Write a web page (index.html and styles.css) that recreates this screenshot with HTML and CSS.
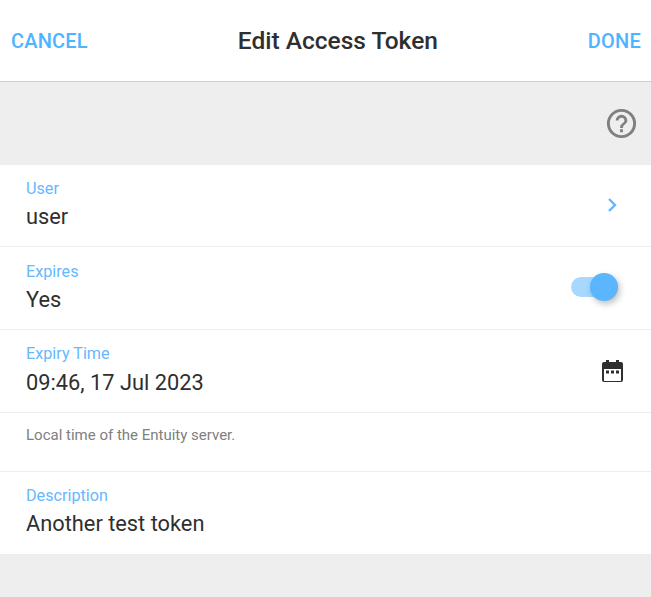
FILE: index.html
```html
<!DOCTYPE html>
<html lang="en">
<head>
<meta charset="utf-8">
<title>Edit Access Token</title>
<link rel="stylesheet" href="styles.css">
</head>
<body>
<header class="topbar">
  <span class="action">CANCEL</span>
  <h1 class="title">Edit Access Token</h1>
  <span class="action">DONE</span>
</header>
<div class="helpband">
  <svg class="help-icon" viewBox="0 0 24 24"><path d="M11,18H13V16H11V18M12,2A10,10 0 0,0 2,12A10,10 0 0,0 12,22A10,10 0 0,0 22,12A10,10 0 0,0 12,2M12,20C7.59,20 4,16.41 4,12C4,7.59 7.59,4 12,4C16.41,4 20,7.59 20,12C20,16.41 16.41,20 12,20M12,6A4,4 0 0,0 8,10H10A2,2 0 0,1 12,8A2,2 0 0,1 14,10C14,12 11,11.75 11,15H13C13,12.75 16,12.5 16,10A4,4 0 0,0 12,6Z"/></svg>
</div>
<main class="form">
  <div class="row">
    <div class="field"><div class="label">User</div><div class="value">user</div></div>
    <svg class="chevron" viewBox="0 0 10 16"><path d="M2 2l6 6-6 6"/></svg>
  </div>
  <div class="row">
    <div class="field"><div class="label">Expires</div><div class="value">Yes</div></div>
    <div class="toggle"><span class="thumb"></span></div>
  </div>
  <div class="row">
    <div class="field"><div class="label">Expiry Time</div><div class="value">09:46, 17 Jul 2023</div></div>
    <svg class="calendar" viewBox="0 0 21 22"><path d="M4 0h3v2h7V0h3v2h2a2 2 0 0 1 2 2v16a2 2 0 0 1-2 2H2a2 2 0 0 1-2-2V4a2 2 0 0 1 2-2h2z"/><rect class="cal-face" x="2" y="9" width="17" height="12"/><rect x="4" y="10.500" width="3" height="3"/><rect x="9" y="10.500" width="3" height="3"/><rect x="14" y="10.500" width="3" height="3"/></svg>
  </div>
  <div class="note">Local time of the Entuity server.</div>
  <div class="row">
    <div class="field"><div class="label">Description</div><div class="value">Another test token</div></div>
  </div>
</main>
</body>
</html>
```
FILE: styles.css
```css
html, body {
  margin: 0;
  height: 100%;
}
body {
  background: #eeeeee;
  font-family: Roboto, sans-serif;
  color: #2f2f2f;
  overflow: hidden;
}
.topbar {
  height: 81px;
  background: #fff;
  border-bottom: 1px solid #d0d0d0;
  display: flex;
  align-items: center;
  justify-content: space-between;
  padding: 0 10px 0 11px;
}
.action {
  font-size: 20px;
  font-weight: 500;
  color: #4db5ff;
  letter-spacing: 0.2px;
}
.title {
  margin: 0;
  font-size: 24.500px;
  font-weight: 500;
  color: #2f2f2f;
}
.helpband {
  height: 83px;
  display: flex;
  align-items: center;
  justify-content: flex-end;
  padding-right: 12px;
}
.help-icon {
  width: 35px;
  height: 35px;
  fill: #808080;
}
.form {
  background: #fff;
  display: flex;
  flex-direction: column;
}
.row {
  height: 81.450px;
  margin-bottom: 0.217px;
  border-bottom: 1px solid #eeeeee;
  padding: 0 28px 0 26px;
  display: flex;
  align-items: center;
  justify-content: space-between;
}
.row:last-child {
  border-bottom: 0;
}
.field {
  align-self: flex-start;
  padding-top: 14px;
}
.label {
  font-size: 16.200px;
  line-height: 19px;
  color: #66b8ff;
}
.value {
  font-size: 21.800px;
  line-height: 26px;
  margin-top: 6.400px;
  color: #2f2f2f;
}
.chevron {
  width: 10px;
  height: 16px;
  margin-right: 6px;
  margin-bottom: 1px;
  fill: none;
  stroke: #66b5ff;
  stroke-width: 2.400;
}
.toggle {
  position: relative;
  width: 47px;
  height: 20px;
  border-radius: 10px;
  background: #a8d8ff;
  margin-right: 5px;
  margin-bottom: 3px;
}
.thumb {
  position: absolute;
  left: 19px;
  top: -4px;
  width: 28px;
  height: 28px;
  border-radius: 50%;
  background: #5bb5ff;
  box-shadow: 2px 3px 6px rgba(0, 0, 0, 0.25);
}
.calendar {
  width: 21px;
  height: 22px;
  margin-bottom: 0;
  fill: #2f2f2f;
}
.cal-face {
  fill: #fff;
}
.note {
  height: 46px;
  border-bottom: 1px solid #eeeeee;
  padding: 12px 26px 0;
  font-size: 15px;
  line-height: 20px;
  color: #808080;
}
```
